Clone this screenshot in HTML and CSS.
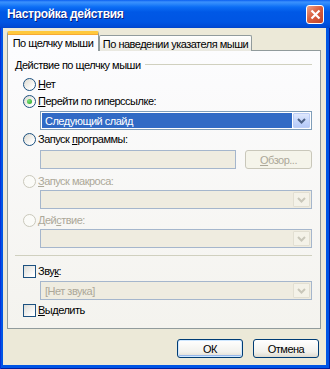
FILE: index.html
```html
<!DOCTYPE html>
<html lang="ru">
<head>
  <meta charset="UTF-8">
  <title>Настройка действия</title>
  <link rel="stylesheet" href="styles.css">
</head>
<body>
  <div class="window">
    <div class="titlebar">
      <span class="title">Настройка действия</span>
      <div class="close">
        <svg width="11" height="11" viewBox="0 0 11 11"><path d="M1.5 1.5 L9.5 9.5 M9.5 1.5 L1.5 9.5" stroke="#fff" stroke-width="2.2"/></svg>
      </div>
    </div>

    <div class="client">
      <div class="tabs">
        <div class="tab active">По щелчку мыши</div>
        <div class="tab">По наведении указателя мыши</div>
      </div>

      <div class="panel">
        <div class="group-title"><span>Действие по щелчку мыши</span><div class="rule"></div></div>

        <div class="option r-none"><span class="radio"></span><span><u>Н</u>ет</span></div>
        <div class="option r-link"><span class="radio checked"></span><span><u>П</u>ерейти по гиперссылке:</span></div>
        <div class="combo focus c-link">
          <div class="value">Следующий слайд</div>
          <div class="arrow"><svg width="9" height="6" viewBox="0 0 9 6"><path d="M1 1 L4.5 4.5 L8 1" fill="none" stroke="#4d6185" stroke-width="2"/></svg></div>
        </div>

        <div class="option r-prog"><span class="radio"></span><span>Запуск <u>п</u>рограммы:</span></div>
        <div class="prog-row">
          <div class="field"></div>
          <div class="btn disabled"><u>О</u>бзор...</div>
        </div>

        <div class="option disabled r-macro"><span class="radio"></span><span><u>З</u>апуск макроса:</span></div>
        <div class="combo c-macro">
          <div class="value"></div>
          <div class="arrow"><svg width="9" height="6" viewBox="0 0 9 6"><path d="M1 1 L4.5 4.5 L8 1" fill="none" stroke="#c9c7ba" stroke-width="2"/></svg></div>
        </div>

        <div class="option disabled r-action"><span class="radio"></span><span>Дей<u>с</u>твие:</span></div>
        <div class="combo c-action">
          <div class="value"></div>
          <div class="arrow"><svg width="9" height="6" viewBox="0 0 9 6"><path d="M1 1 L4.5 4.5 L8 1" fill="none" stroke="#c9c7ba" stroke-width="2"/></svg></div>
        </div>

        <div class="separator"></div>

        <div class="option s-sound"><span class="checkbox"></span><span>Зву<u>к</u>:</span></div>
        <div class="combo c-sound">
          <div class="value">[Нет звука]</div>
          <div class="arrow"><svg width="9" height="6" viewBox="0 0 9 6"><path d="M1 1 L4.5 4.5 L8 1" fill="none" stroke="#c9c7ba" stroke-width="2"/></svg></div>
        </div>

        <div class="option s-hl"><span class="checkbox"></span><span><u>В</u>ыделить</span></div>
      </div>

      <div class="buttons">
        <div class="btn default">ОК</div>
        <div class="btn">Отмена</div>
      </div>
    </div>
  </div>
</body>
</html>
```

FILE: styles.css
```css
* {
  box-sizing: border-box;
  margin: 0;
  padding: 0;
}

html, body {
  width: 330px;
  height: 369px;
  overflow: hidden;
  background-color: #ece9d8;
}

body {
  font-family: "Liberation Sans", Arial, sans-serif;
  font-size: 11px;
  letter-spacing: -0.5px;
  color: #000;
}

u {
  text-decoration: underline;
  text-underline-offset: 1px;
}

.window {
  width: 330px;
  height: 369px;
  display: flex;
  flex-direction: column;
  background-color: #0055e5;
  box-shadow: inset 1px 0 #0831d9, inset -1px 0 #001ea0, inset 0 -1px #001ea0;
}

.titlebar {
  height: 28px;
  display: flex;
  align-items: center;
  padding: 0 6px 0 7px;
  background: linear-gradient(to bottom, #0a5ff0 0, #3b91fd 2px, #2a86fa 4px, #0b6df5 7px, #0058e6 12px, #0055e3 22px, #0049d4 27px, #0043c8 28px);
}

.title {
  flex: 1;
  color: #fff;
  font-weight: bold;
  font-size: 12px;
  letter-spacing: -0.3px;
  text-shadow: 1px 1px #0f1f7c;
}

.close {
  width: 18px;
  height: 19px;
  margin-top: 1px;
  border: 1px solid #fff;
  border-radius: 3px;
  background: linear-gradient(135deg, #eda28a, #d9603f 45%, #c2432a);
  display: flex;
  align-items: center;
  justify-content: center;
}

.client {
  flex: 1;
  margin: 0 4px 4px 3px;
  padding: 3px 5px 0 4px;
  background-color: #ece9d8;
}

/* tabs */

.tabs {
  display: flex;
  align-items: flex-end;
  height: 20px;
  margin-bottom: -1px;
  position: relative;
  z-index: 1;
}

.tab {
  height: 16px;
  width: 153px;
  border: 1px solid #919b9c;
  border-bottom: none;
  border-radius: 2px 2px 0 0;
  background: linear-gradient(to bottom, #fff, #f3f2ec 60%, #e9e8e0);
  display: flex;
  align-items: center;
  justify-content: center;
  white-space: nowrap;
}

.tab.active {
  width: 92px;
  height: 20px;
  border-top: 3px solid #ffc83c;
  box-shadow: inset 0 1px #f6a935;
  background: #fcfcfe;
  padding-top: 1px;
}

.panel {
  height: 279px;
  border: 1px solid #919b9c;
  background: linear-gradient(to bottom, #fcfcfe, #f4f3ee);
  padding: 6px 8px 0 7px;
  display: flex;
  flex-direction: column;
}

.group-title {
  height: 16px;
  display: flex;
  align-items: center;
  gap: 4px;
}

.rule {
  flex: 1;
  height: 1px;
  background-color: #d0d0bf;
  margin-top: -1px;
}

.separator {
  height: 1px;
  background-color: #d0d0bf;
  margin-top: 7px;
}

/* radios and checkboxes */

.option {
  height: 16px;
  display: flex;
  align-items: center;
  gap: 2px;
  padding-left: 8px;
  white-space: nowrap;
}

.option.disabled {
  color: #aca899;
}

.radio {
  width: 13px;
  height: 13px;
  border-radius: 50%;
  border: 1px solid #1c5180;
  background: linear-gradient(135deg, #dcd9cf, #fff 80%);
  display: flex;
  align-items: center;
  justify-content: center;
}

.radio.checked::after {
  content: "";
  width: 5px;
  height: 5px;
  border-radius: 50%;
  background: radial-gradient(circle at 35% 35%, #7ce27c, #21a121);
}

.option.disabled .radio {
  border-color: #cac8bb;
  background: #fbfbf8;
}

.checkbox {
  width: 13px;
  height: 13px;
  border: 1px solid #1c5180;
  background: linear-gradient(135deg, #dcdcd7, #fff 85%);
}

.r-none { margin-top: 3px; }
.r-link { margin-top: 1px; }
.c-link { margin-top: 2px; height: 20px; }
.r-prog { margin-top: 1px; }
.prog-row { margin-top: 3px; }
.r-macro { margin-top: 4px; }
.c-macro { margin-top: 1px; }
.r-action { margin-top: 3px; }
.c-action { margin-top: 1px; }
.s-sound { margin-top: 7px; }
.c-sound { margin-top: 2px; height: 18px; }
.s-hl { margin-top: 2px; }

/* combos and fields */

.combo {
  height: 19px;
  margin-left: 25px;
  border: 1px solid #a5b6cc;
  background-color: #efece0;
  padding: 1px;
  display: flex;
  gap: 1px;
}

.combo .value {
  flex: 1;
  display: flex;
  align-items: center;
  padding-left: 3px;
  color: #aca899;
}

.combo .arrow {
  width: 17px;
  border: 1px solid #e2dfd2;
  border-radius: 1px;
  background-color: #f4f2e8;
  display: flex;
  align-items: center;
  justify-content: center;
}

.combo.focus {
  border-color: #7f9db9;
  background-color: #fff;
}

.combo.focus .value {
  background-color: #316ac5;
  color: #fff;
}

.combo.focus .arrow {
  border-color: #bccdf5;
  background: linear-gradient(to bottom, #dfe8fd, #c3d4fb 60%, #b5c9f7);
}

.prog-row {
  height: 19px;
  margin-left: 25px;
  display: flex;
  gap: 9px;
}

.field {
  width: 196px;
  border: 1px solid #a5b6cc;
  background-color: #efece0;
}

/* push buttons */

.btn {
  border: 1px solid #003c74;
  border-radius: 3px;
  background: linear-gradient(to bottom, #fff, #f2f1ec 70%, #dedad0);
  display: flex;
  align-items: center;
  justify-content: center;
  white-space: nowrap;
}

.btn.disabled {
  flex: 1;
  border-color: #c9c7ba;
  background: #f5f4ea;
  color: #aca899;
}

.btn.default {
  box-shadow: inset 0 0 0 1px #cee7ff, inset 0 -1px 0 1px #98b8ea;
}

.buttons {
  display: flex;
  justify-content: flex-end;
  gap: 10px;
  margin-top: 10px;
  padding-right: 2px;
}

.buttons .btn {
  width: 66px;
  height: 19px;
}
```
